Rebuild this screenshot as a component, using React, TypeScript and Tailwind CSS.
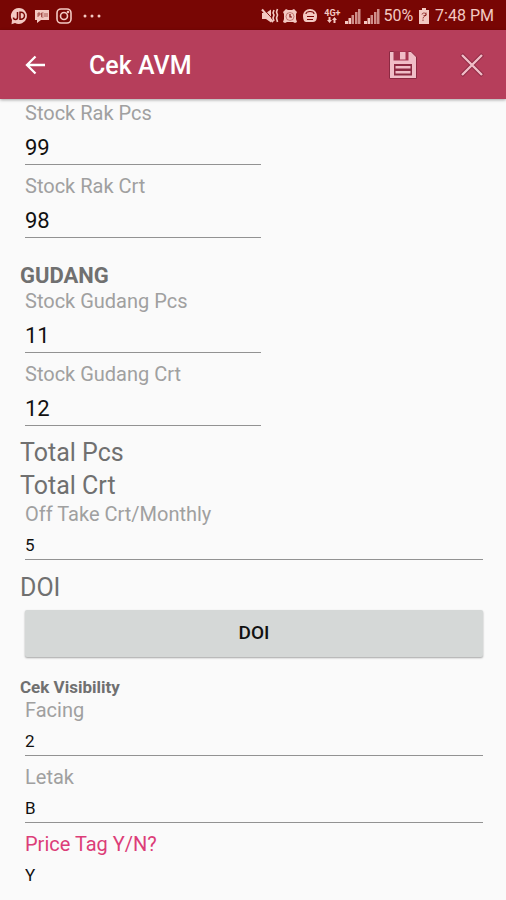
import { clsx } from "clsx";
import { useId, useState } from "react";

type FieldProps = {
  label: string;
  initial: string;
  size?: "lg" | "sm";
  active?: boolean;
};

// Label on top, underlined text box below.
function Field({ label, initial, size = "sm", active = false }: FieldProps) {
  const id = useId();
  const [value, setValue] = useState(initial);

  return (
    <div className="mx-[5px] flex flex-col">
      <label
        htmlFor={id}
        className={clsx("text-[20px] leading-6", active ? "text-[#dc3d78]" : "text-[#a0a0a0]")}
      >
        {label}
      </label>
      <input
        id={id}
        value={value}
        onChange={(e) => setValue(e.target.value)}
        className={clsx(
          "w-full border-b bg-transparent text-[#111111] outline-none",
          size === "lg" ? "h-10 pt-[6px] text-[22px]" : "h-[34px] pt-1 text-[17px]",
          active ? "border-transparent" : "border-[#929292]",
        )}
      />
    </div>
  );
}

function Signal() {
  return (
    <svg viewBox="0 0 16 16" className="h-4 w-4" fill="currentColor" aria-hidden="true">
      <path d="M0 13h3v3H0zM3.500 10h2.500v6H3.500z" />
      <path d="M6.500 7h2.500v9H6.500zM10 4h2.500v12H10zM13 1h2.500v15H13z" opacity=".7" />
    </svg>
  );
}

function StatusBar() {
  return (
    <div className="flex h-[30px] items-center justify-between bg-[#780604] pt-[2px] pr-3 pl-[10px] text-[#f3c9c2]">
      <div className="flex items-center gap-[6px]">
        <svg viewBox="0 0 18 18" className="h-[18px] w-[18px]" aria-hidden="true">
          <path d="M9 1a8 8 0 1 1-4 15l-3.500 1.200L2 13A8 8 0 0 1 9 1z" fill="currentColor" />
          <path
            d="M7.500 5v5.500a2 2 0 0 1-4 0M10 5.200v7h1a3.500 3.500 0 0 0 0-7z"
            fill="none"
            stroke="#780604"
            strokeWidth="1.500"
          />
        </svg>
        <svg viewBox="0 0 16 16" className="h-4 w-4" aria-hidden="true">
          <path d="M1 2h14v10H7l-4 3v-3H1z" fill="currentColor" />
          <path d="M4 9V5h2v2H4M7.500 9V5h2M7.500 7h2M7.500 9h2M11 5v4M13 5v4" fill="none" stroke="#780604" opacity=".6" />
        </svg>
        <svg viewBox="0 0 16 16" className="h-4 w-4" fill="none" stroke="currentColor" strokeWidth="1.600" aria-hidden="true">
          <rect x="1" y="1" width="14" height="14" rx="4" />
          <circle cx="8" cy="8" r="3.500" />
          <circle cx="12" cy="4" r=".5" />
        </svg>
        <svg viewBox="0 0 18 4" className="ml-[5px] h-1 w-[18px]" fill="currentColor" aria-hidden="true">
          <circle cx="2" cy="2" r="1.500" />
          <circle cx="9" cy="2" r="1.500" />
          <circle cx="16" cy="2" r="1.500" />
        </svg>
      </div>
      <div className="flex items-center gap-[3px]">
        <svg viewBox="0 0 18 16" className="h-4 w-[18px]" aria-hidden="true">
          <path d="M1 5h4L10 1.500v13L5 11H1z" fill="currentColor" />
          <path d="M3 1.500l9 10" stroke="#780604" />
          <path d="M1 1.500l11 12.500" stroke="currentColor" strokeWidth="2" />
          <path d="M13 2l-1 3 1 2-1 3 1 3M16.500 1l-1 3 1 3-1 3 1 4" fill="none" stroke="currentColor" strokeWidth="1.600" />
        </svg>
        <svg viewBox="0 0 16 16" className="h-4 w-4" aria-hidden="true">
          <path d="M1 4l3-3 2 1h4l2-1 3 3-1 2v5l1 3-2 1-2-1H5l-2 1-2-1 1-3V6z" fill="currentColor" />
          <circle cx="8" cy="8.500" r="4" fill="none" stroke="#780604" opacity=".4" />
          <path d="M8 6v3h2" fill="none" stroke="#780604" strokeWidth="1.200" />
        </svg>
        <svg viewBox="0 0 18 16" className="h-4 w-[18px]" aria-hidden="true">
          <path d="M9 1c4 0 7 3 7 7 0 3-1 6-4 6H5c-2 0-3-3-3-6 0-4 3-7 7-7z" fill="currentColor" />
          <path d="M5 6a4 2.500 0 0 1 8 0M6 8.500h7M6 11.500h6" fill="none" stroke="#780604" strokeWidth="1.200" />
        </svg>
        <div className="flex w-5 flex-col items-center">
          <span className="text-[9px] leading-2 font-bold">4G+</span>
          <svg viewBox="0 0 10 6" className="h-[6px] w-[10px]" fill="currentColor" aria-hidden="true">
            <path d="M0 3h1.500V0h2v3H5L2.500 6zM5 3l2.500-3L10 3H8.500v3h-2V3z" />
          </svg>
        </div>
        <Signal />
        <Signal />
        <span className="text-[16px] leading-5">50%</span>
        <svg viewBox="0 0 12 16" className="mx-[2px] h-4 w-3" aria-hidden="true">
          <path d="M4 0h4v2h3v14H1V2h3z" fill="currentColor" />
          <path d="M4 6.500c0-2 4-2 4 0S5 8 5 10.500M8 4.500v3H5.500M5 11.500V13" fill="none" stroke="#780604" opacity=".7" />
        </svg>
        <span className="text-[16px] leading-5">7:48 PM</span>
      </div>
    </div>
  );
}

function AppBar() {
  return (
    <header className="flex h-[69px] items-center bg-[#b63e5b] pr-[21px] pl-[23px] text-white shadow-[0_1px_3px_rgba(0,0,0,0.35)]">
      <button type="button" aria-label="Back" className="flex w-6 justify-center">
        <svg viewBox="0 0 22 20" className="h-5 w-[22px]" fill="none" stroke="currentColor" strokeWidth="2.300" aria-hidden="true">
          <path d="M21 10H3M11.500 1.500L3 10l8.500 8.500" />
        </svg>
      </button>
      <h1 className="ml-[42px] flex-1 pt-[2px] text-[25px] leading-8 font-medium">Cek AVM</h1>
      <button type="button" aria-label="Save" className="text-[#f0bdc7]">
        <svg viewBox="0 0 30 30" className="h-[30px] w-[30px]" aria-hidden="true">
          <path
            d="M1.500 1.500h21.500l5.500 5.500v21.500h-27z"
            fill="currentColor"
            stroke="#8c2942"
          />
          <path d="M5.500 1h15v9.500h-15z" fill="#a63450" />
          <path d="M12 2h5.500v7.500H12z" fill="currentColor" />
          <path d="M6 14h18v11.500H6z" fill="#8c2942" />
          <path d="M7.500 17.200h15M7.500 22.200h15" stroke="currentColor" strokeWidth="2.600" />
        </svg>
      </button>
      <button type="button" aria-label="Close" className="ml-[41px] text-[#f0bdc7]">
        <svg viewBox="0 0 26 26" className="h-[26px] w-[26px]" fill="none" aria-hidden="true">
          <path d="M2.500 2.500l21 21M23.500 2.500l-21 21" stroke="#8c2942" strokeWidth="4" />
          <path d="M3 3l20 20M23 3L3 23" stroke="currentColor" strokeWidth="2.400" />
        </svg>
      </button>
    </header>
  );
}

export default function App() {
  return (
    <div className="flex min-h-screen flex-col bg-[#fafafa] font-[Roboto,sans-serif]">
      <StatusBar />
      <AppBar />
      <main className="flex flex-col pt-[2px] pr-[18px] pl-5 text-[#707070]">
        <div className="flex w-[246px] flex-col gap-[9px]">
          <Field label="Stock Rak Pcs" initial="99" size="lg" />
          <Field label="Stock Rak Crt" initial="98" size="lg" />
        </div>

        <h2 className="mt-6 text-[22px] leading-[27px] font-bold">GUDANG</h2>
        <div className="flex w-[246px] flex-col gap-[9px]">
          <Field label="Stock Gudang Pcs" initial="11" size="lg" />
          <Field label="Stock Gudang Crt" initial="12" size="lg" />
        </div>

        <p className="mt-[10px] text-[25px] leading-[33px]">Total Pcs</p>
        <p className="text-[25px] leading-[33px]">Total Crt</p>
        <Field label="Off Take Crt/Monthly" initial="5" />

        <p className="mt-[11px] text-[25px] leading-[33px]">DOI</p>
        <button
          type="button"
          className="mx-[5px] mt-[6px] h-[47px] rounded-xs bg-[#d5d8d7] text-[19px] font-medium text-[#111111] shadow-[0_1px_2px_rgba(0,0,0,0.35)]"
        >
          DOI
        </button>

        <h2 className="mt-[19px] text-[17px] leading-[22px] font-bold">Cek Visibility</h2>
        <div className="flex flex-col gap-[9px]">
          <Field label="Facing" initial="2" />
          <Field label="Letak" initial="B" />
          <Field label="Price Tag Y/N?" initial="Y" active />
        </div>
      </main>
    </div>
  );
}
